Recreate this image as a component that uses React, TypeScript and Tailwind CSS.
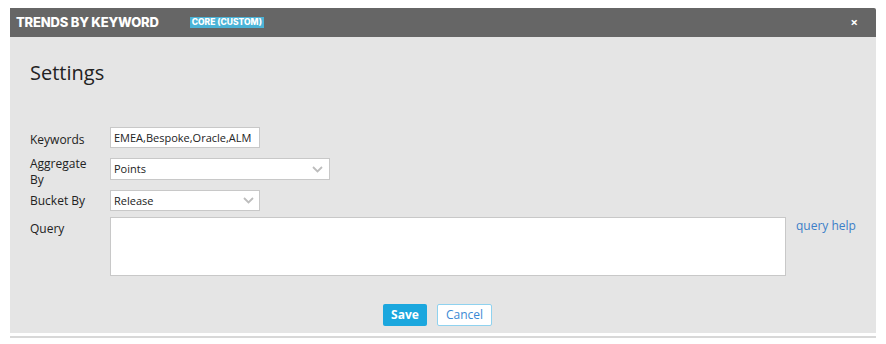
import React from "react";

function Chevron() {
  return (
    <svg width="11" height="7" viewBox="0 0 11 7" className="shrink-0">
      <polyline points="1,1 5.5,5.5 10,1" fill="none" stroke="#bdbdbd" strokeWidth="1.8" />
    </svg>
  );
}

export default function App() {
  const body = { fontFamily: '"Open Sans", "Liberation Sans", sans-serif' };
  return (
    <div className="w-[886px] h-[344px] bg-white pt-[8px] px-[10px]" style={body}>
      <div className="w-[866px]">
        <div className="h-[29px] bg-[#666666] flex items-center pl-[6px] pr-[18px] rounded-tr-[2px]">
          <span
            className="text-white text-[13px] font-extrabold tracking-[-0.2px] leading-none"
            style={{ fontFamily: 'Inter, "Liberation Sans", sans-serif' }}
          >
            TRENDS BY KEYWORD
          </span>
          <span
            className="ml-[31px] bg-[#4bb3d7] text-white text-[8.5px] font-extrabold leading-[11px] h-[11px] px-[2px] -mt-[1px]"
            style={{ fontFamily: 'Inter, "Liberation Sans", sans-serif' }}
          >
            CORE (CUSTOM)
          </span>
          <span className="ml-auto text-white text-[13px] font-bold leading-none -mt-[1px]">×</span>
        </div>
        <div className="h-[296px] bg-[#e5e5e5] pl-[20px] pt-[22px]">
          <div className="text-[20px] leading-[28px] text-[#222]">Settings</div>
          <div className="mt-[40px] text-[12px] leading-[16px] text-[#222]">
            <div className="flex items-start h-[21px]">
              <div className="w-[80px] mt-[5px]">Keywords</div>
              <div className="w-[150px] h-[21px] bg-white border border-[#c8c8c8] pl-[3px] flex items-center text-[11px]">
                EMEA,Bespoke,Oracle,ALM
              </div>
            </div>
            <div className="flex items-start mt-[10px] h-[22px]">
              <div className="w-[80px] -mt-[2px]">
                Aggregate
                <br />
                By
              </div>
              <div className="w-[220px] h-[22px] bg-white border border-[#c8c8c8] pl-[3px] pr-[6px] flex items-center justify-between text-[11px]">
                <span>Points</span>
                <Chevron />
              </div>
            </div>
            <div className="flex items-start mt-[10px] h-[21px]">
              <div className="w-[80px] mt-[3px]">Bucket By</div>
              <div className="w-[150px] h-[21px] bg-white border border-[#c8c8c8] pl-[3px] pr-[5px] flex items-center justify-between text-[11px]">
                <span>Release</span>
                <Chevron />
              </div>
            </div>
            <div className="flex items-start mt-[6px]">
              <div className="w-[80px] mt-[4px]">Query</div>
              <div className="w-[676px] h-[59px] bg-white border border-[#c8c8c8]" />
              <div className="ml-[10px] mt-[1px] text-[#3c7fc8]">query help</div>
            </div>
            <div className="flex justify-center gap-[10px] mt-[28px] pr-[31px]">
              <div className="w-[44px] h-[22px] bg-[#1ba7de] rounded-[2px] text-white font-bold flex items-center justify-center">
                Save
              </div>
              <div className="w-[55px] h-[22px] bg-white border border-[#8fd2ef] rounded-[2px] text-[#3a89d4] flex items-center justify-center">
                Cancel
              </div>
            </div>
          </div>
        </div>
        <div className="mt-[3px] h-[2px] bg-[#d8d8d8]" />
      </div>
    </div>
  );
}
